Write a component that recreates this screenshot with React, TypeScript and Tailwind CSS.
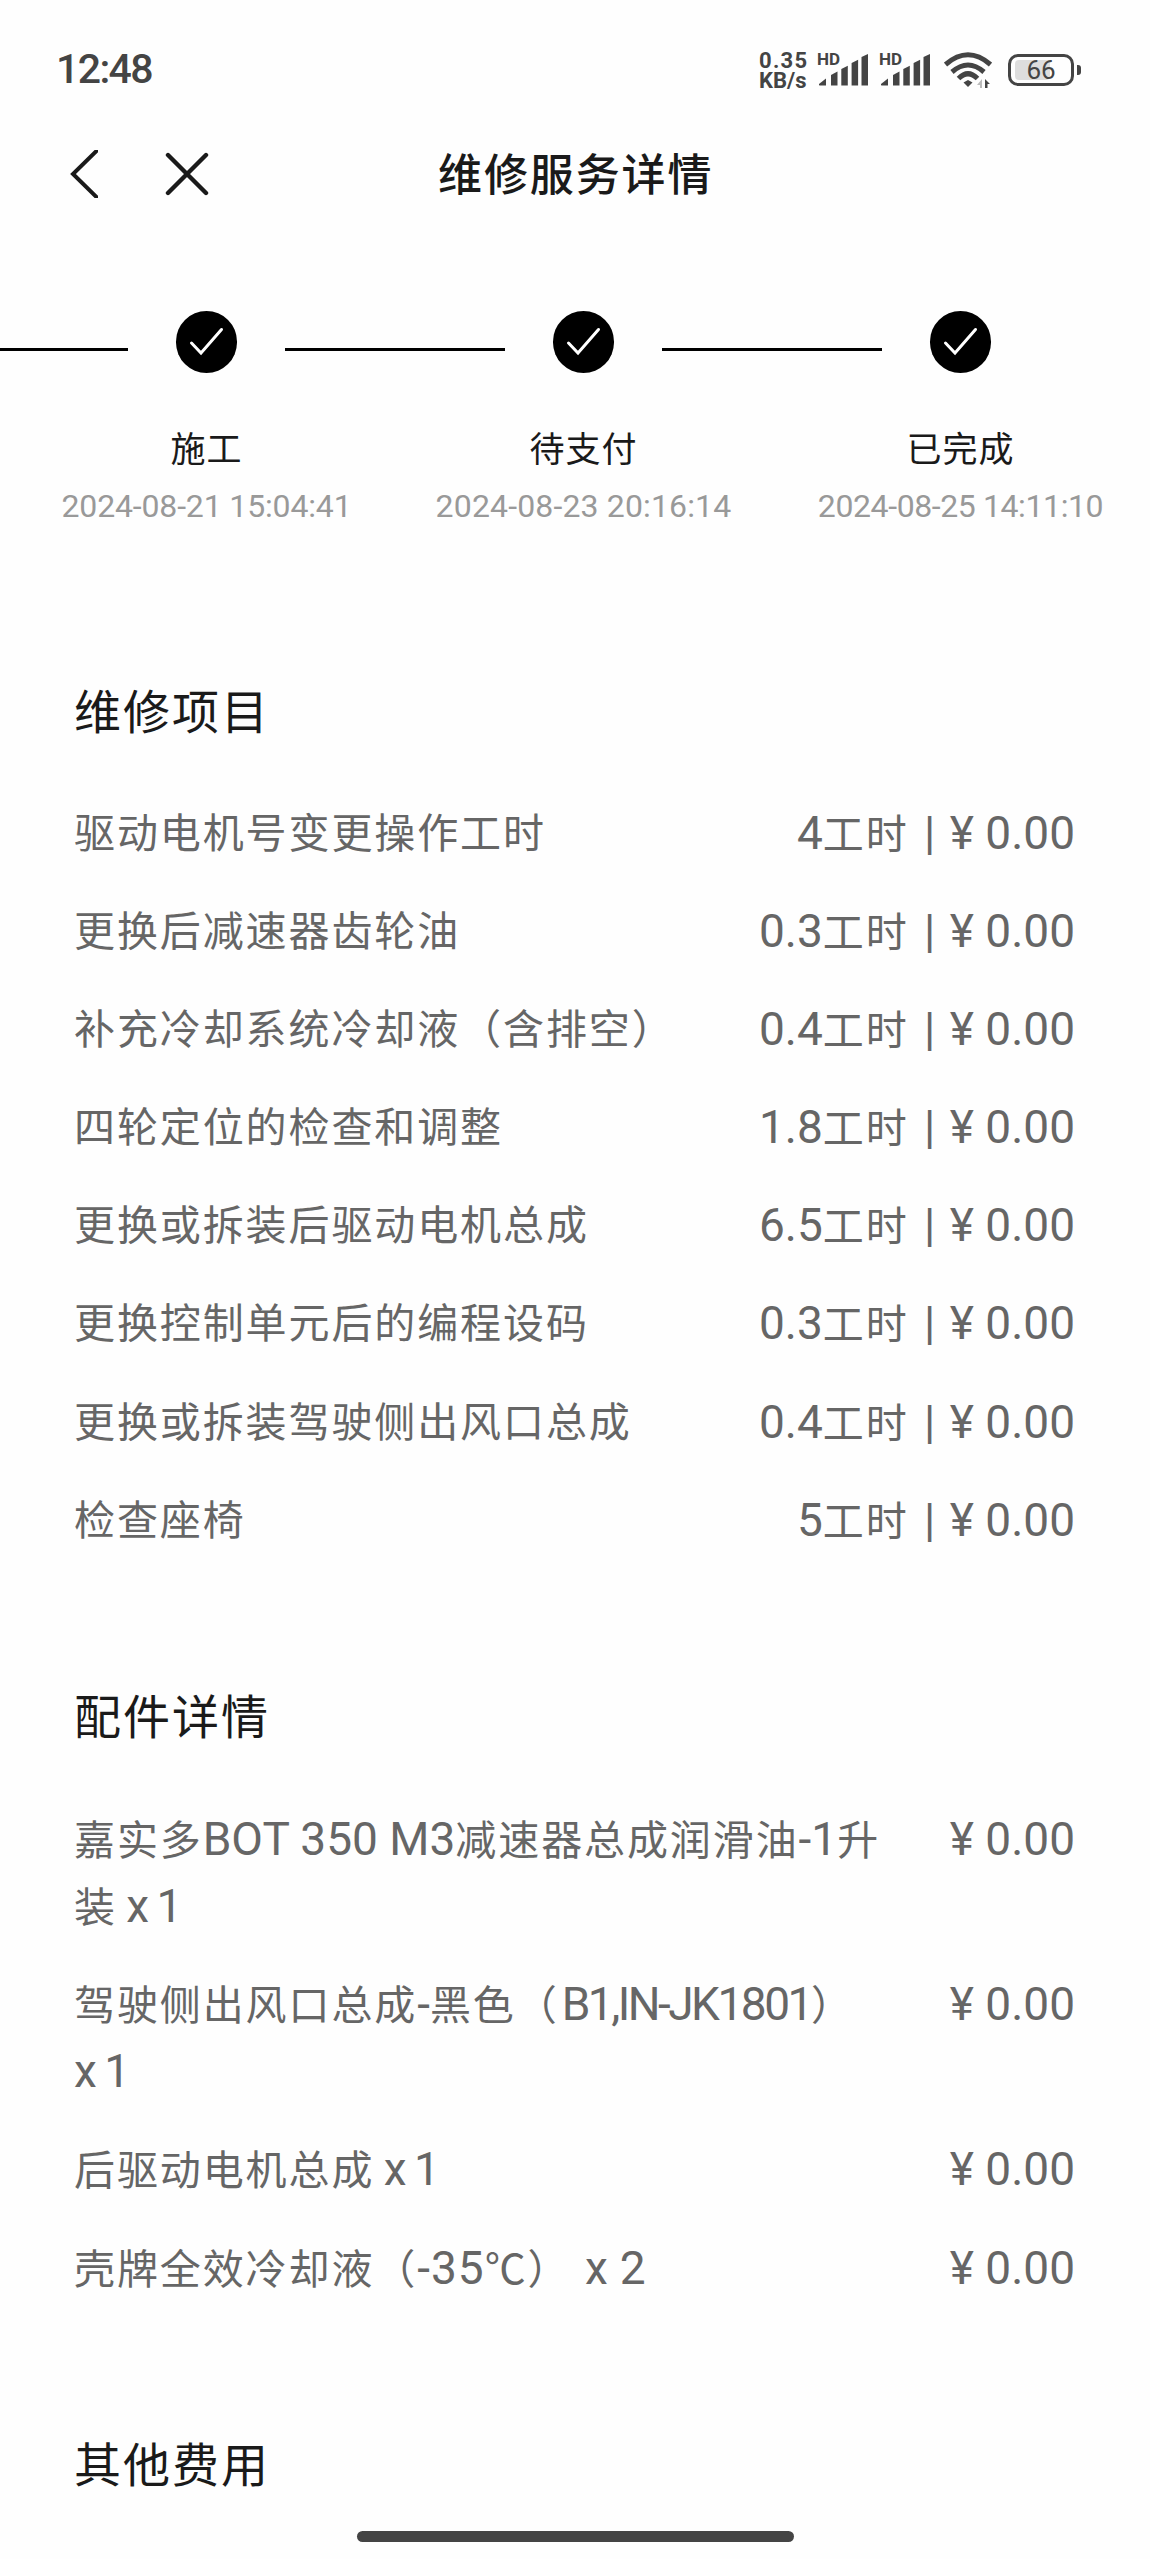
import React from 'react';
import clsx from 'clsx';

const steps = [
  { name: '施工', time: '2024-08-21 15:04:41', tracking: 'tracking-[-0.150px]' },
  { name: '待支付', time: '2024-08-23 20:16:14', tracking: 'tracking-[0.150px]' },
  { name: '已完成', time: '2024-08-25 14:11:10', tracking: 'tracking-[-0.400px]' },
];

const repairs = [
  { name: '驱动电机号变更操作工时', hours: '4' },
  { name: '更换后减速器齿轮油', hours: '0.3' },
  { name: '补充冷却系统冷却液（含排空）', hours: '0.4' },
  { name: '四轮定位的检查和调整', hours: '1.8' },
  { name: '更换或拆装后驱动电机总成', hours: '6.5' },
  { name: '更换控制单元后的编程设码', hours: '0.3' },
  { name: '更换或拆装驾驶侧出风口总成', hours: '0.4' },
  { name: '检查座椅', hours: '5' },
];

const parts = [
  ['嘉实多BOT 350 M3减速器总成润滑油-1升', '装 x 1'],
  ['驾驶侧出风口总成-黑色（B1,IN-JK1801）', 'x 1'],
  ['后驱动电机总成 x 1'],
  ['壳牌全效冷却液（-35℃） x 2'],
];

// Spacing of the runs that need their own
const runStyle: Record<string, string> = {
  'B1,IN-JK1801': 'tracking-[-2.500px] ml-[3px]',
  '-35': 'tracking-[1px]',
  'x 1': 'tracking-[-2px]',
  'x 2': 'tracking-[0.200px] ml-[3px]',
};

// Latin runs are set a little larger than the Chinese text around them
const Mixed = ({ text }: { text: string }) => (
  <>
    {text.split(/([\x20-\x7e¥]+)/).map((run, i) =>
      i % 2 ? (
        <span key={i} className={clsx("font-['Roboto'] text-[46px]", runStyle[run.trim()] || 'tracking-normal')}>{run}</span>
      ) : (
        run
      )
    )}
  </>
);

const Signal = () => (
  <div className="relative w-[51px] h-[34px]">
    <span className="absolute left-0 top-0 text-[17px] leading-[13px] font-bold">HD</span>
    <svg viewBox="0 0 51 34" className="w-full h-full" fill="currentColor">
      <path d="M2 31l7-5.500v7h-6q-1.500 0-1-1.500z" />
      <path d="M14 22l6.500-3.500V32.500h-6.500z" />
      <path d="M24.300 16l6.500-3.200V32.500h-6.500z" />
      <path d="M34.600 10l6.500-3.200V32.500h-6.500z" />
      <path d="M44.500 4l6.500-3V32.500h-6.500z" />
    </svg>
  </div>
);

const StatusBar = () => (
  <div className="h-[138px] pl-[56px] pr-[69px] flex items-center justify-between text-[#444]">
    <span className="pt-px font-medium text-[41px] tracking-[-1.600px]">12:48</span>
    <div className="flex items-center pt-[1px]">
      <div className="w-[58px] pt-[3px] text-[22px] leading-[20px] font-bold whitespace-nowrap">
        <div className="tracking-[1.300px]">0.35</div>
        <div>KB/s</div>
      </div>
      <Signal />
      <div className="w-[11px]" />
      <Signal />
      <svg viewBox="0 0 48 36" className="w-[48px] h-[36px] ml-[14px]" fill="none" stroke="currentColor" strokeWidth="5">
        <path d="M1.500 12.500Q24-7 46.500 12.500" />
        <path d="M8 20Q24 6 40 20" />
        <path d="M14.500 26.500Q24 17 33.500 26.500" />
        <path d="M24 28l4.500 2.500-4.500 4.500-4.500-4.500z" fill="currentColor" stroke="none" />
        <path d="M38 27v9h-2v-3h-3z" fill="#bbb" stroke="none" />
        <path d="M41 36v-9l5 5h-2.500v4z" fill="currentColor" stroke="none" />
      </svg>
      <div className="relative ml-[16px] w-[66px] h-[32px] rounded-[10px] border-3 border-[#444] flex items-center justify-center">
        <div className="absolute left-[4px] top-[3px] w-[35px] h-[20px] rounded-[4px] bg-[#ddd]" />
        <span className="relative text-[26px] leading-none">66</span>
      </div>
      <div className="ml-[3px] w-[4px] h-[10px] rounded-r-[3px] bg-[#444]" />
    </div>
  </div>
);

const NavBar = () => (
  <div className="h-[72px] flex items-center text-[#1a1a1a]">
    <svg viewBox="0 0 28 48" className="w-[28px] h-[48px] ml-[70px]" fill="none" stroke="currentColor" strokeWidth="4">
      <path d="M28-.500L3 24L28 48.500" />
    </svg>
    <svg viewBox="0 0 44 44" className="w-[44px] h-[44px] ml-[67px]" fill="none" stroke="currentColor" strokeWidth="4.400" strokeLinecap="round">
      <path d="M3 3l38 38M41 3L3 41" />
    </svg>
    <h1 className="ml-[229px] pt-[4px] text-[44px] leading-none font-medium tracking-[1.900px]">维修服务详情</h1>
  </div>
);

const Dot = () => (
  <div className="w-[61px] h-[62px] rounded-full bg-black shrink-0">
    <svg viewBox="0 0 61 62" className="w-full h-full" fill="none" stroke="#fff" strokeWidth="3" strokeLinecap="round">
      <path d="M15.500 32l9.500 10L45.500 18.500" />
    </svg>
  </div>
);

const Line = ({ className }: { className: string }) => (
  <div className={clsx('h-[3px] mt-[14px] bg-black shrink-0', className)} />
);

const SectionTitle = ({ children }: { children: React.ReactNode }) => (
  <h2 className="h-[66px] leading-[66px] text-[47px] tracking-[2px] text-[#1a1a1a]">{children}</h2>
);

export default function App() {
  return (
    <div className="w-[1150px] h-[2559px] overflow-hidden bg-[#fefefe] flex flex-col font-['Roboto','Noto_Sans_CJK_SC',sans-serif]">
      <StatusBar />
      <NavBar />

      {/* Progress */}
      <div className="mt-[101px] flex items-center">
        <Line className="w-[128px] mr-[48px]" />
        <Dot />
        <Line className="w-[220px] mx-[48px]" />
        <Dot />
        <Line className="w-[220px] mx-[48px]" />
        <Dot />
      </div>
      <div className="mt-[52px] ml-[18px] w-[1131px] grid grid-cols-3 text-center whitespace-nowrap">
        {steps.map(step => (
          <div key={step.name}>
            <div className="h-[52px] leading-[52px] text-[35px] tracking-[1px] text-[#1a1a1a]">{step.name}</div>
            <div className={clsx('mt-[3px] h-[52px] leading-[52px] text-[32px] text-[#999]', step.tracking)}>{step.time}</div>
          </div>
        ))}
      </div>

      <main className="pl-[74px] pr-[75px] pt-[148px] text-[41px] leading-[66.600px] tracking-[1.900px] text-[#666] whitespace-nowrap">
        <SectionTitle>维修项目</SectionTitle>
        <div className="mt-[54px] flex flex-col gap-[31.500px]">
          {repairs.map(item => (
            <div key={item.name} className="h-[66.600px] flex justify-between">
              <span className="pt-px">{item.name}</span>
              <span>
                <Mixed text={item.hours + '工时'} />
                <span className="ml-[4px] mr-[3px]"><Mixed text=" | " /></span>
                <Mixed text="¥ 0.00" />
              </span>
            </div>
          ))}
        </div>

        <div className="h-[132px]" />
        <SectionTitle>配件详情</SectionTitle>
        <div className="mt-[55px] flex flex-col gap-[31.800px]">
          {parts.map(lines => (
            <div key={lines[0]} className="flex justify-between">
              <div>
                {lines.map(line => (
                  <div key={line} className="h-[66.600px]"><Mixed text={line} /></div>
                ))}
              </div>
              <span className="h-[66.600px]"><Mixed text="¥ 0.00" /></span>
            </div>
          ))}
        </div>

        <div className="h-[132px]" />
        <SectionTitle>其他费用</SectionTitle>
      </main>

      {/* Home indicator */}
      <div className="mt-auto mb-[17px] ml-[357px] w-[437px] h-[11px] shrink-0 rounded-full bg-[#444]" />
    </div>
  );
}
